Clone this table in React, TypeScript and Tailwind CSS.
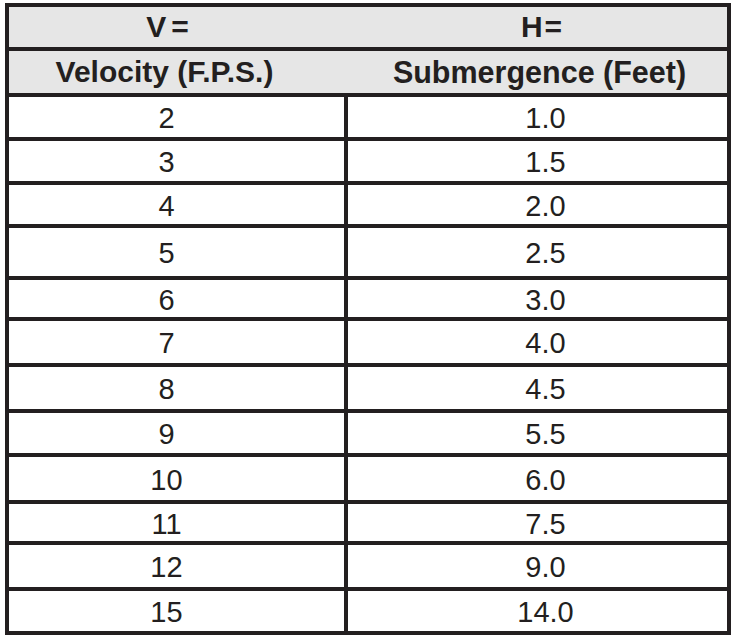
import React from "react";

const rows: { v: string; h: string; height: string }[] = [
  { v: "2", h: "1.0", height: "h-[44px]" },
  { v: "3", h: "1.5", height: "h-[44px]" },
  { v: "4", h: "2.0", height: "h-[43px]" },
  { v: "5", h: "2.5", height: "h-[52px]" },
  { v: "6", h: "3.0", height: "h-[41px]" },
  { v: "7", h: "4.0", height: "h-[46px]" },
  { v: "8", h: "4.5", height: "h-[46px]" },
  { v: "9", h: "5.5", height: "h-[44px]" },
  { v: "10", h: "6.0", height: "h-[47px]" },
  { v: "11", h: "7.5", height: "h-[41px]" },
  { v: "12", h: "9.0", height: "h-[46px]" },
  { v: "15", h: "14.0", height: "h-[40px]" },
];

export default function App() {
  return (
    <div
      className="w-[734px] h-[641px] bg-white pt-[3px] pl-[5px] text-[#231f20]"
      style={{ fontFamily: '"Liberation Sans", Arial, sans-serif' }}
    >
      <div className="w-[726px] border-[4px] border-[#231f20] flex flex-col">
        {/* header rows */}
        <div className="h-[44px] bg-[#e6e6e6] border-b-[4px] border-[#231f20] flex text-[30px] font-bold leading-none">
          <div className="w-[339px] flex items-center justify-center pr-[22px]">
            <span className="mr-[5px]">V</span>=
          </div>
          <div className="w-[379px] flex items-center justify-center pl-[8px]">
            <span className="mr-[2px]">H</span>=
          </div>
        </div>
        <div className="h-[46px] bg-[#e6e6e6] border-b-[4px] border-[#231f20] flex font-bold leading-none">
          <div className="w-[339px] flex items-center justify-center pr-[28px] text-[30px]">
            Velocity (F.P.S.)
          </div>
          <div className="w-[379px] flex items-center justify-center pl-[4px] text-[30.5px]">
            Submergence (Feet)
          </div>
        </div>

        {/* data rows */}
        {rows.map((r, i) => (
          <div
            key={r.v}
            className={`${r.height} flex text-[29px] leading-none ${
              i < rows.length - 1 ? "border-b-[4px] border-[#231f20]" : ""
            }`}
          >
            <div className="w-[335px] flex items-center justify-center pr-[20px] pt-[3px]">{r.v}</div>
            <div className="w-[4px] bg-[#231f20]" />
            <div className="w-[379px] flex items-center justify-center pl-[16px] pt-[3px]">{r.h}</div>
          </div>
        ))}
      </div>
    </div>
  );
}
